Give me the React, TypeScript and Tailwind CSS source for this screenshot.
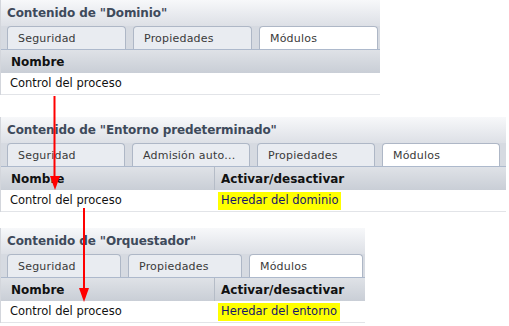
import React from 'react';

type Panel = {
  title: string;
  width: number;
  tabs: string[];
  tabW: number;
  inherit?: string;
};

const panels: Panel[] = [
  { title: 'Contenido de "Dominio"', width: 380, tabs: ['Seguridad', 'Propiedades', 'Módulos'], tabW: 119 },
  {
    title: 'Contenido de "Entorno predeterminado"',
    width: 506,
    tabs: ['Seguridad', 'Admisión auto...', 'Propiedades', 'Módulos', ''],
    tabW: 118,
    inherit: 'Heredar del dominio',
  },
  {
    title: 'Contenido de "Orquestador"',
    width: 365,
    tabs: ['Seguridad', 'Propiedades', 'Módulos'],
    tabW: 114,
    inherit: 'Heredar del entorno',
  },
];

const ContentPanel = ({ p }: { p: Panel }) => {
  const active = p.tabs.indexOf('Módulos');
  return (
    <section className="flex flex-col border-l border-[#d3d6dc]" style={{ width: p.width }}>
      <div className="h-[26px] flex items-center pl-[6px] bg-gradient-to-b from-[#f7f8fa] to-[#dde0e6] text-[12px] font-bold text-[#3e4a5b] tracking-[-0.1px]">
        {p.title}
      </div>
      <div className="h-[24px] flex items-end gap-[7px] pl-[6px] bg-[#d6dae1] border-b border-[#adb9cc] overflow-hidden">
        {p.tabs.map((t, i) => (
          <div
            key={i}
            className={
              'h-[23px] shrink-0 flex items-center pl-[10px] rounded-t-[4px] border border-b-0 border-[#aeb7c6] text-[11px] tracking-[0.2px] text-[#3a3a3a] ' +
              (i === active ? 'bg-white' : 'bg-[#e9ecf1]')
            }
            style={{ width: t ? p.tabW : 20 }}
          >
            {t}
          </div>
        ))}
      </div>
      <div className="h-[23px] flex bg-gradient-to-b from-[#dfe2e7] to-[#c9ced6] text-[12px] font-bold text-[#111]">
        {p.inherit ? (
          <>
            <div className="w-[214px] flex items-center pl-[10px] border-r border-[#b5bcc7]">Nombre</div>
            <div className="flex items-center pl-[6px]">Activar/desactivar</div>
          </>
        ) : (
          <div className="flex items-center pl-[10px]">Nombre</div>
        )}
      </div>
      <div className="h-[22px] flex items-center bg-white border-b border-[#e2e4e8] text-[11.5px] text-[#111]">
        <div className="w-[215px] pl-[9px]">Control del proceso</div>
        {p.inherit && (
          <span className="ml-[2px] h-[18px] flex items-center px-[3px] bg-[#ffff00] text-[#16166a]">{p.inherit}</span>
        )}
      </div>
    </section>
  );
};

export default function App() {
  return (
    <div className="relative w-[509px] h-[326px] bg-white font-['DejaVu_Sans',sans-serif] leading-none">
      <div className="flex flex-col">
        <ContentPanel p={panels[0]} />
        <div className="h-[22px]" />
        <ContentPanel p={panels[1]} />
        <div className="h-[16px]" />
        <ContentPanel p={panels[2]} />
      </div>
      <svg className="absolute left-0 top-0" width="509" height="326">
        <line x1="54.5" y1="96" x2="54.5" y2="180" stroke="#f00" strokeWidth="2" />
        <polygon points="50,176 60,176 55,190" fill="#f00" />
        <line x1="84" y1="208" x2="84" y2="292" stroke="#f00" strokeWidth="2" />
        <polygon points="79,288 89,288 84,302" fill="#f00" />
      </svg>
    </div>
  );
}
